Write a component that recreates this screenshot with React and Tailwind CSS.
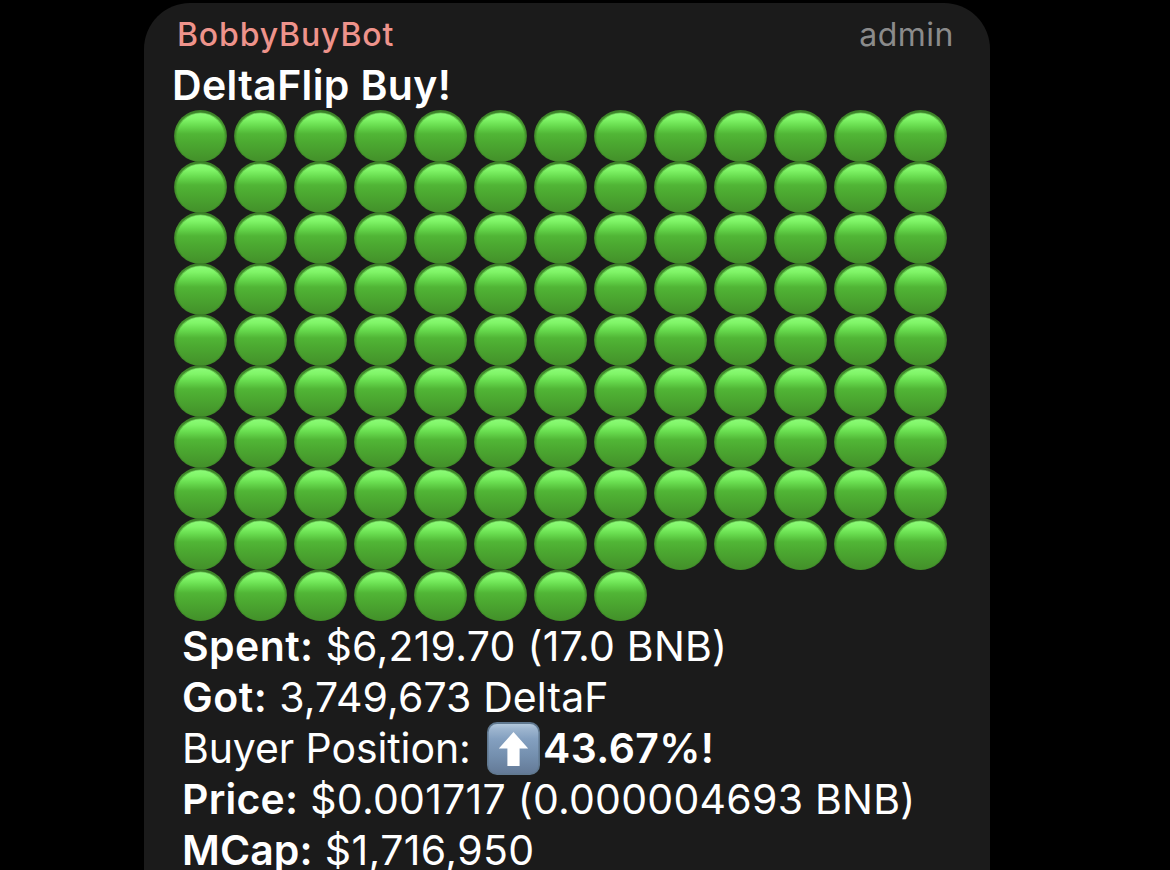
const circleRows = [13, 13, 13, 13, 13, 13, 13, 13, 13, 8];

const details = [
  { label: 'Spent:', value: '$6,219.70 (17.0 BNB)', labelClass: 'tracking-[0.4px]', valueClass: 'tracking-[0.25px]' },
  { label: 'Got:', value: '3,749,673 DeltaF', labelClass: 'tracking-[0.5px]', valueClass: 'tracking-[0.1px]' },
  { position: true },
  { label: 'Price:', value: '$0.001717 (0.000004693 BNB)', labelClass: 'tracking-[0.2px]', valueClass: 'tracking-[0.25px]' },
  { label: 'MCap:', value: '$1,716,950', labelClass: 'tracking-[0.1px]', valueClass: 'tracking-[0.4px]' },
];

function Gradients() {
  return (
    <svg width="0" height="0" className="absolute" aria-hidden="true">
      <defs>
        <linearGradient id="rim" x1="0" y1="0" x2="0" y2="1">
          <stop offset="0" stopColor="#3a7f26" />
          <stop offset="0.3" stopColor="#45952d" />
          <stop offset="1" stopColor="#3d8526" />
        </linearGradient>
        <linearGradient id="body" x1="0" y1="0" x2="0" y2="1">
          <stop offset="0" stopColor="#8cfb78" />
          <stop offset="0.12" stopColor="#80f568" />
          <stop offset="0.26" stopColor="#68dc4f" />
          <stop offset="0.43" stopColor="#51b636" />
          <stop offset="0.6" stopColor="#4caa31" />
          <stop offset="1" stopColor="#43902a" />
        </linearGradient>
      </defs>
    </svg>
  );
}

function GreenCircle() {
  return (
    <svg viewBox="0 0 53 52" className="h-[52px] w-[53px] shrink-0">
      <ellipse cx="26.5" cy="26" rx="26.4" ry="26" fill="url(#rim)" />
      <ellipse cx="26.5" cy="27" rx="25" ry="24.6" fill="url(#body)" opacity="0.5" />
      <ellipse cx="26.5" cy="27.3" rx="24" ry="24.1" fill="url(#body)" />
    </svg>
  );
}

function UpArrow() {
  return (
    <svg viewBox="0 0 53 53" className="-mt-[1px] h-[53px] w-[53px] shrink-0">
      <defs>
        <linearGradient id="tile" x1="0" y1="0" x2="0" y2="1">
          <stop offset="0" stopColor="#b3c8dc" />
          <stop offset="0.1" stopColor="#9db5cf" />
          <stop offset="0.3" stopColor="#84a0c0" />
          <stop offset="0.65" stopColor="#748fae" />
          <stop offset="1" stopColor="#647a97" />
        </linearGradient>
      </defs>
      <rect width="53" height="53" rx="10" fill="#60788f" />
      <rect x="1.6" y="2" width="49.8" height="49.4" rx="8.5" fill="url(#tile)" />
      <path d="M26.5 10 L41.2 26.6 H32.6 V43.9 H20.4 V26.6 H11.8 Z" fill="#fff" />
    </svg>
  );
}

export default function App() {
  return (
    <main className="flex h-[870px] overflow-hidden bg-black pl-[144px] pt-[3px] font-['Inter',sans-serif] text-white">
      <Gradients />
      <article className="h-[920px] w-[846px] shrink-0 rounded-t-[46px] bg-[#1b1b1b]">
        <header className="flex h-[57px] items-start justify-between pl-[33px] pr-[36px] pt-[12px] text-[32px] leading-[39px]">
          <span className="font-medium tracking-[0.85px] text-[#ee938b]">BobbyBuyBot</span>
          <span className="tracking-[0.5px] text-[#8b8b8b]">admin</span>
        </header>

        <div className="text-[41px] leading-[51px]">
          <h1 className="h-[50px] pl-[28px] font-semibold tracking-[0.35px]">DeltaFlip Buy!</h1>

          <div className="pl-[30px]">
            {circleRows.map((count, row) => (
              <div key={row} className="flex h-[51px] gap-[7px]">
                {Array.from({ length: count }, (_, i) => (
                  <GreenCircle key={i} />
                ))}
              </div>
            ))}
          </div>

          <div className="pl-[38px] pt-[1px]">
            {details.map((row) =>
              row.position ? (
                <div key="position" className="flex h-[51px] whitespace-pre">
                  <span className="w-[305px] tracking-[-0.1px]">Buyer Position:</span>
                  <UpArrow />
                  <span className="ml-[3px] font-semibold tracking-[0.4px]">43.67%!</span>
                </div>
              ) : (
                <div key={row.label} className="flex h-[51px] gap-[12px] whitespace-pre">
                  <span className={`font-semibold ${row.labelClass}`}>{row.label}</span>
                  <span className={row.valueClass}>{row.value}</span>
                </div>
              )
            )}
          </div>
        </div>
      </article>
    </main>
  );
}
